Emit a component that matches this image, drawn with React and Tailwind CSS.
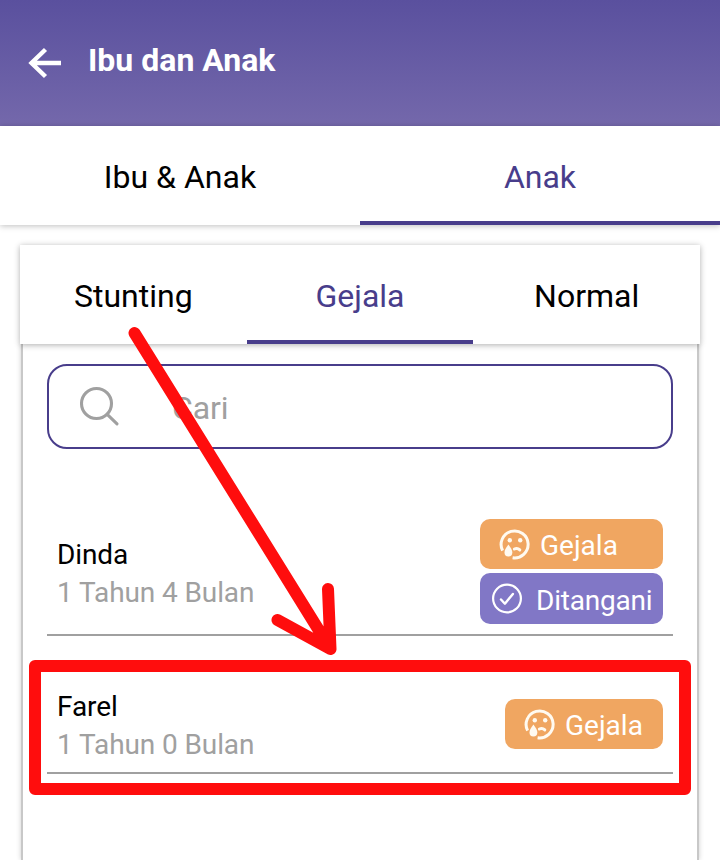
function Tab({ label, active, className = '' }) {
  return (
    <div
      className={`flex flex-1 items-center justify-center border-b-4 pt-[7px] text-[32px] leading-[38px] ${
        active ? 'border-[#483d8b] text-[#483d8b]' : 'border-transparent text-black'
      } ${className}`}
    >
      {label}
    </div>
  );
}

function SadTearIcon() {
  return (
    <svg width="32" height="32" viewBox="0 0 32 32" fill="none" stroke="#fffaf0" strokeWidth="3" className="shrink-0">
      <path d="M3.6 22.6A13.5 13.5 0 1 1 13.6 29.8" />
      <circle cx="10.8" cy="12.2" r="2.2" fill="#fffaf0" stroke="none" />
      <circle cx="21.2" cy="12.2" r="2.2" fill="#fffaf0" stroke="none" />
      <path d="M15.4 21c2-1 4-.5 5.4.9" strokeWidth="3" strokeLinecap="round" />
      <path d="M9.4 16.6c-2.7 3.600-3.900 5.800-3.900 7.900a3.900 3.900 0 0 0 7.800 0c0-2.100-1.200-4.300-3.900-7.900Z" fill="#fffaf0" stroke="none" />
    </svg>
  );
}

function CheckCircleIcon() {
  return (
    <svg width="32" height="32" viewBox="0 0 32 32" fill="none" stroke="white" strokeWidth="2.2" className="shrink-0">
      <circle cx="16" cy="15.500" r="13.9" />
      <path d="M10 16.500l3.900 4.200 8-9.800" strokeWidth="2.4" strokeLinecap="round" strokeLinejoin="round" />
    </svg>
  );
}

function SymptomBadge({ className = '' }) {
  return (
    <div className={`flex h-[50px] items-center gap-[9px] rounded-[10px] bg-[#f0a661] pl-[19px] text-[28px] text-white ${className}`}>
      <SadTearIcon />
      <span className="pt-[3px]">Gejala</span>
    </div>
  );
}

function Child({ name, age, className = '', textClassName = '', children }) {
  return (
    <div className={`flex justify-between border-b-2 border-[#a0a0a0] pr-[10px] pl-[10px] ${className}`}>
      <div className={`flex flex-col self-end text-[28px] leading-[38px] tracking-[-0.1px] ${textClassName}`}>
        <span className="text-black">{name}</span>
        <span className="text-[#a0a0a0]">{age}</span>
      </div>
      {children}
    </div>
  );
}

export default function App() {
  return (
    <div className="relative flex h-[860px] w-[720px] flex-col overflow-hidden bg-white font-[Roboto,sans-serif]">
      <header className="flex h-[126px] shrink-0 items-center bg-linear-to-b from-[#5a509e] to-[#7468ab] pl-7 text-white">
        <svg width="34" height="32" viewBox="0 0 34 32" fill="none" stroke="white" strokeWidth="4.4">
          <path d="M33 16H3M17.500 2.500L3.500 16l14 13.500" />
        </svg>
        <h1 className="mb-[6px] pl-[26px] text-[32px] leading-9 font-bold">Ibu dan Anak</h1>
      </header>

      <nav className="z-10 flex h-[99px] shrink-0 bg-white shadow-[0_1px_6px_rgba(0,0,0,0.25)]">
        <Tab label="Ibu & Anak" />
        <Tab label="Anak" active />
      </nav>

      <nav className="z-10 mx-5 mt-5 flex h-[99px] shrink-0 bg-white shadow-[0_1px_6px_rgba(0,0,0,0.32)]">
        <Tab label="Stunting" />
        <Tab label="Gejala" active />
        <Tab label="Normal" />
      </nav>

      <main className="mx-[21px] flex flex-1 flex-col border-x-2 border-[#c8c8c8] px-6 pt-5 shadow-[0_0_5px_rgba(0,0,0,0.2)]">
        <div className="flex h-[85px] shrink-0 items-center rounded-[20px] border-2 border-[#483d8b] pl-[30px]">
          <svg width="42" height="42" viewBox="0 0 42 42" fill="none" stroke="#a0a0a0" strokeWidth="3.1" strokeLinecap="round">
            <circle cx="17.500" cy="17.500" r="15" />
            <path d="M28.200 28.300L38 37.800" />
          </svg>
          <span className="pt-[2px] pl-[51px] text-[32px] tracking-[-0.1px] text-[#a0a0a0]">Cari</span>
        </div>

        <Child name="Dinda" age="1 Tahun 4 Bulan" className="mt-[60px] h-[127px] pt-[10px]" textClassName="pb-[22px]">
          <div className="flex w-[183px] flex-col gap-1">
            <SymptomBadge />
            <div className="flex h-[51px] items-center gap-[13px] rounded-[10px] bg-[#8177c6] pl-[11px] text-[28px] tracking-[-0.2px] text-white">
              <CheckCircleIcon />
              <span className="pt-[4px]">Ditangani</span>
            </div>
          </div>
        </Child>
        <Child name="Farel" age="1 Tahun 0 Bulan" className="h-[138px] pt-[52px]" textClassName="pb-[8px]">
          <SymptomBadge className="mt-[11px] w-[158px]" />
        </Child>
      </main>

      <div className="absolute top-[660px] left-[29px] z-20 h-[135px] w-[662px] rounded-md border-12 border-[#ff0d0d]" />
      <svg className="absolute top-0 left-0 z-20" width="720" height="860" fill="none" stroke="#ff0d0d" strokeWidth="12" strokeLinecap="round" strokeLinejoin="round">
        <path d="M134.500 333L330.500 649M277.500 620L330.500 649L328 589" />
      </svg>
    </div>
  );
}
